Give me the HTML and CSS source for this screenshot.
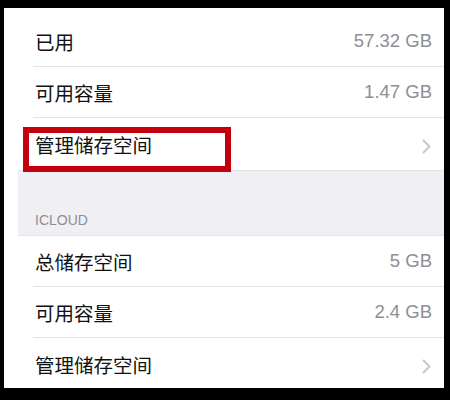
FILE: index.html
```html
<!DOCTYPE html>
<html lang="zh-CN">
<head>
<meta charset="utf-8">
<link rel="stylesheet" href="styles.css">
</head>
<body>
<div class="screen">
  <div class="content">
    <div class="group first">
      <div class="row"><span class="label">已用</span><span class="value">57.32 GB</span></div>
      <div class="row"><span class="label">可用容量</span><span class="value">1.47 GB</span></div>
      <div class="row last"><span class="label">管理储存空间</span><svg class="chev" width="9" height="15" viewBox="0 0 9 15"><path d="M1.5 1.5 L7.5 7.5 L1.5 13.5" fill="none" stroke="#c7c7cc" stroke-width="2" stroke-linecap="round" stroke-linejoin="round"/></svg></div>
    </div>
    <div class="header">ICLOUD</div>
    <div class="group">
      <div class="row"><span class="label">总储存空间</span><span class="value">5 GB</span></div>
      <div class="row"><span class="label">可用容量</span><span class="value">2.4 GB</span></div>
      <div class="row last"><span class="label">管理储存空间</span><svg class="chev" width="9" height="15" viewBox="0 0 9 15"><path d="M1.5 1.5 L7.5 7.5 L1.5 13.5" fill="none" stroke="#c7c7cc" stroke-width="2" stroke-linecap="round" stroke-linejoin="round"/></svg></div>
    </div>
  </div>
  <div class="highlight"></div>
</div>
</body>
</html>
```
FILE: styles.css
```css
html, body {
  margin: 0;
  padding: 0;
  background: #000;
}
body {
  width: 450px;
  height: 400px;
  overflow: hidden;
}
.screen {
  position: relative;
  margin: 8px 0 0 4px;
  width: 440px;
  height: 380px;
  background: #fff;
  overflow: hidden;
  font-family: "Liberation Sans", "Noto Sans CJK SC", sans-serif;
}
.content {
  margin-left: 14px;
  display: flex;
  flex-direction: column;
}
.group {
  background: #fff;
  display: flex;
  flex-direction: column;
}
.group.first {
  padding-top: 8px;
}
.row {
  height: 51px;
  box-sizing: border-box;
  margin-left: 15px;
  padding: 0 12px 0 2px;
  border-bottom: 1px solid #e3e3e6;
  display: flex;
  align-items: center;
  justify-content: space-between;
}
.row.last {
  border-bottom: none;
  height: 52px;
}
.label {
  font-family: "Noto Sans CJK SC", sans-serif;
  font-size: 19.5px;
  color: #111;
  letter-spacing: 0;
}
.value {
  font-size: 18.5px;
  color: #8e8e93;
}
.chev {
  margin-top: 5px;
  margin-right: 1px;
}
.header {
  height: 66px;
  box-sizing: border-box;
  background: #efeff4;
  border-top: 1px solid #e3e3e6;
  border-bottom: 1px solid #e3e3e6;
  padding: 0 0 7px 17px;
  display: flex;
  align-items: flex-end;
  font-size: 14px;
  line-height: 16px;
  color: #8e8e93;
}
.highlight {
  position: absolute;
  left: 19px;
  top: 119px;
  width: 208px;
  height: 45px;
  box-sizing: border-box;
  border: 6px solid #c3000b;
}
```
